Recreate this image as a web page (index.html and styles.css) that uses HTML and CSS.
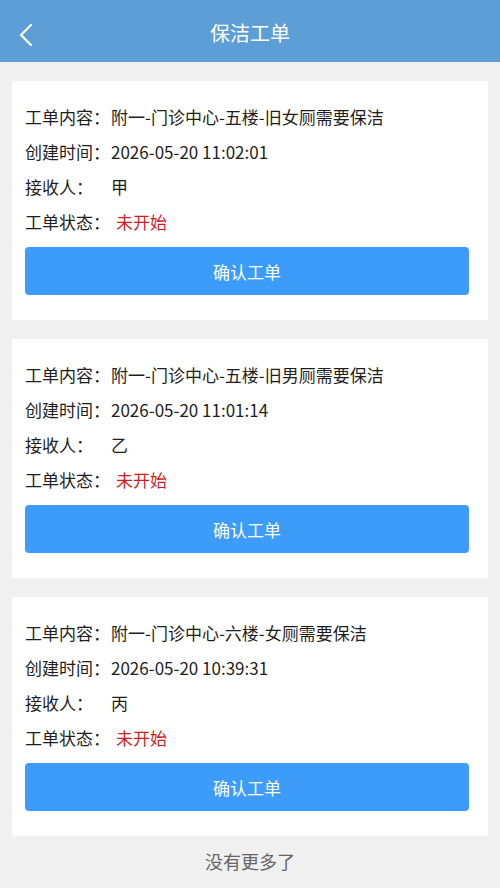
FILE: index.html
```html
<!DOCTYPE html>
<html lang="zh-CN">
<head>
  <meta charset="UTF-8">
  <meta name="viewport" content="width=device-width, initial-scale=1.0">
  <title>保洁工单</title>
  <link rel="stylesheet" href="styles.css">
</head>

<body>
  <div class="header">
    <span class="back">
      <svg width="14" height="22" viewBox="0 0 14 22">
        <path d="M12 1 L2 11 L12 21" fill="none" stroke="#fff" stroke-width="2.2" stroke-linecap="round" stroke-linejoin="round"/>
      </svg>
    </span>
    <h1>保洁工单</h1>
  </div>

  <div class="list">
    <div class="card">
      <div class="row"><span class="label">工单内容：</span><span>附一-门诊中心-五楼-旧女厕需要保洁</span></div>
      <div class="row"><span class="label">创建时间：</span><span>2026-05-20 11:02:01</span></div>
      <div class="row"><span class="label">接收人：</span><span>甲</span></div>
      <div class="row"><span class="label">工单状态：</span><span class="status">未开始</span></div>
      <button class="confirm">确认工单</button>
    </div>

    <div class="card">
      <div class="row"><span class="label">工单内容：</span><span>附一-门诊中心-五楼-旧男厕需要保洁</span></div>
      <div class="row"><span class="label">创建时间：</span><span>2026-05-20 11:01:14</span></div>
      <div class="row"><span class="label">接收人：</span><span>乙</span></div>
      <div class="row"><span class="label">工单状态：</span><span class="status">未开始</span></div>
      <button class="confirm">确认工单</button>
    </div>

    <div class="card">
      <div class="row"><span class="label">工单内容：</span><span>附一-门诊中心-六楼-女厕需要保洁</span></div>
      <div class="row"><span class="label">创建时间：</span><span>2026-05-20 10:39:31</span></div>
      <div class="row"><span class="label">接收人：</span><span>丙</span></div>
      <div class="row"><span class="label">工单状态：</span><span class="status">未开始</span></div>
      <button class="confirm">确认工单</button>
    </div>
  </div>

  <div class="no-more">没有更多了</div>
</body>
</html>
```

FILE: styles.css
```css
body {
  margin: 0;
  font-family: "Noto Sans CJK SC", "Noto Sans", sans-serif;
  background-color: #f0f0f0;
  color: #1e1e1e;
}

.header {
  position: relative;
  height: 62px;
  background-color: #5e9ed6;
  display: flex;
  align-items: center;
  justify-content: center;
}

.header h1 {
  margin: 0;
  padding-top: 3px;
  font-size: 20px;
  font-weight: normal;
  color: #fff;
}

.back {
  position: absolute;
  left: 19px;
  top: 24px;
  line-height: 0;
}

.list {
  padding: 19px 12px 0;
  display: flex;
  flex-direction: column;
  gap: 19px;
}

.card {
  background-color: #fff;
  padding: 18px 19px 25px 13px;
}

.row {
  display: flex;
  height: 35px;
  align-items: center;
  font-size: 17px;
}

.label {
  width: 86px;
  flex-shrink: 0;
}

.status {
  color: #d11d1d;
  margin-left: 5px;
}

.confirm {
  display: block;
  width: 100%;
  height: 48px;
  margin-top: 8px;
  border: none;
  border-radius: 4px;
  background-color: #3d9cfa;
  color: #fff;
  font-family: inherit;
  font-size: 17px;
}

.no-more {
  text-align: center;
  font-size: 18px;
  color: #666;
  padding-top: 12px;
}
```
